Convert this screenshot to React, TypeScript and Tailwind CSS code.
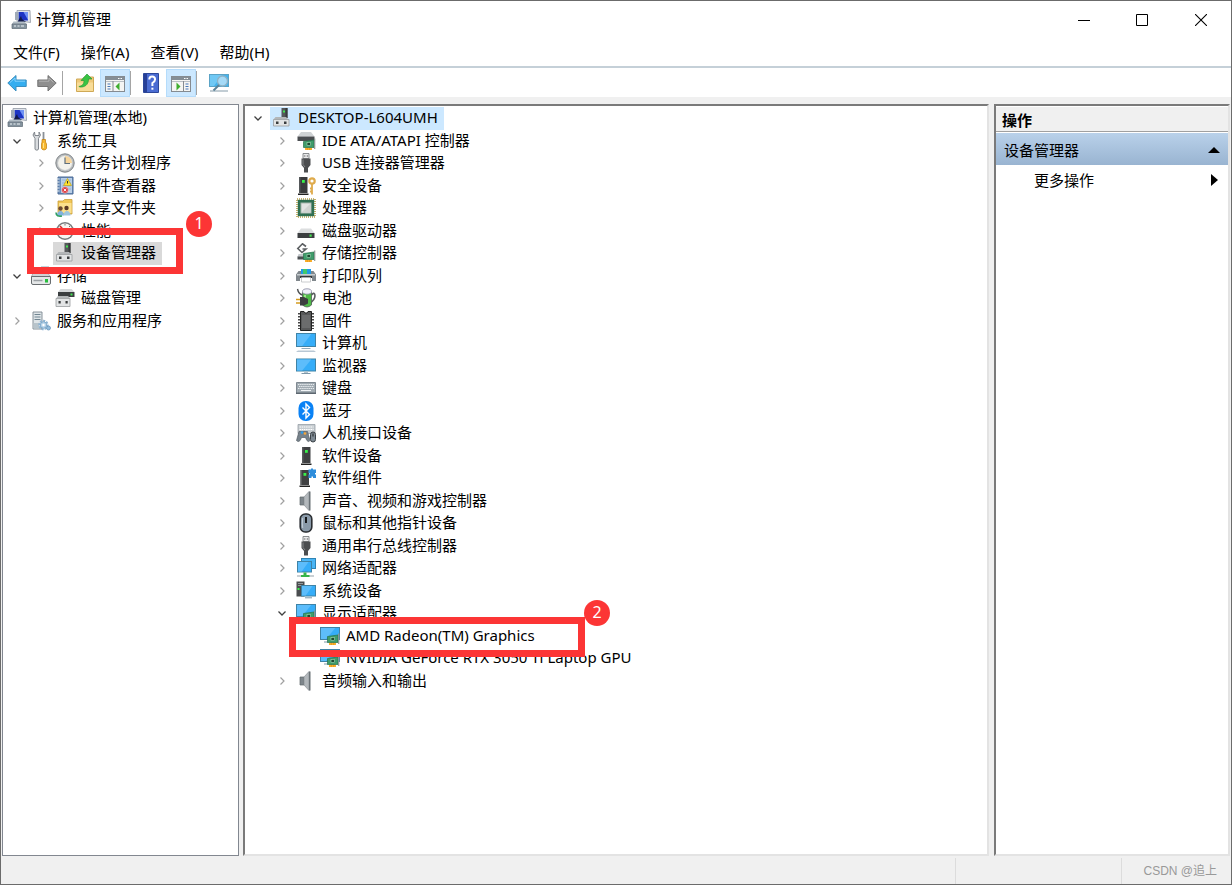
import React from "react";

type IconProps = { children: React.ReactNode };

const Svg: React.FC<IconProps> = ({ children }) => (
  <svg viewBox="0 0 20 20" className="size-5 shrink-0" aria-hidden="true">
    {children}
  </svg>
);

/* Small green adapter card, shared by several device icons */
const Card: React.FC = () => (
  <>
    <path d="M9 16.5h7V19H9z" fill="#fbb02c" />
    <path d="M11.3 16.5V19M13.7 16.5V19" stroke="#d98a14" strokeWidth="0.6" />
    <path d="M7.5 10.5L18 9v7.5H7.5z" fill="#3f9c6b" stroke="#27724a" strokeWidth="0.7" />
    <rect x="11" y="11.500" width="3.600" height="3" fill="#1c4a31" stroke="#a6dcb9" strokeWidth="0.6" />
    <path d="M18.700 7.500V18" stroke="#8e9794" strokeWidth="1.200" />
  </>
);

const Screen: React.FC<{ x: number; y: number; w: number; h: number }> = ({ x, y, w, h }) => (
  <>
    <rect x={x} y={y} width={w} height={h} fill="#36adf8" stroke="#3f83a6" />
    <path
      d={`M${x + 0.5} ${y + 0.5}h${w * 0.75}L${x + w * 0.3} ${y + h - 0.5}H${x + 0.5}z`}
      fill="#5dbdfb"
    />
  </>
);

const ComputerIcon: React.FC = () => (
  <Svg>
    <path d="M6 .5h13l.5 12-7-1H6z" fill="#dfe3ea" stroke="#9299a3" strokeWidth="0.8" />
    <path d="M7.5 2h9.500v8.500h-9.500z" fill="#1c34c4" />
    <path d="M12.500 2H17v8z" fill="#6f92f4" />
    <path d="M4 2h3.500v8H4z" fill="#a0abb8" />
    <path d="M7 11l3-5 1 3 4 3H7z" fill="#11194a" />
    <path d="M2.500 11.500h11l2 2.500H1z" fill="#b3bec6" />
    <path d="M1 14h14.500v4.500H1z" fill="#84939e" stroke="#5b6973" strokeWidth="0.7" />
    <path d="M3 16h2M6.500 16h2M10 16h3" stroke="#edf2f4" />
  </Svg>
);

const ToolsIcon: React.FC = () => (
  <Svg>
    <path
      d="M3.500 1L2 4l2 3.500V18c0 1.500 3.500 1.500 3.500 0V7.500l2-3.500L8 1v3.500H4z"
      fill="#d9dcdf"
      stroke="#777d83"
      strokeWidth="0.9"
    />
    <path d="M12.500 1v8" stroke="#8a9097" strokeWidth="1.8" />
    <path d="M11 8.500h3.500V11l1 2v4c0 2.500-5 2.500-5 0v-4l.5-2z" fill="#f7b72f" stroke="#bd7b0b" strokeWidth="0.7" />
    <path d="M12.500 12v5" stroke="#ffe28a" />
  </Svg>
);

const ClockIcon: React.FC = () => (
  <Svg>
    <circle cx="10" cy="10" r="9.200" fill="#b5b9bb" stroke="#808588" />
    <circle cx="10" cy="10" r="7.200" fill="#f3f2ec" stroke="#d8dadb" strokeWidth="0.6" />
    <path d="M10 10V3a7 7 0 0 1 7 7z" fill="#f6d49a" />
    <path d="M10 4.500v6h5" fill="none" stroke="#5f6f7c" strokeWidth="1.2" />
  </Svg>
);

const EventIcon: React.FC = () => (
  <Svg>
    <path d="M3 1h15v17H3z" fill="#6c8fbb" stroke="#4a6b96" />
    <path d="M6 2h11v15H6z" fill="#b9cee6" />
    <path d="M7 4h9M7 7h9M7 10h9M7 13h9" stroke="#8badd2" strokeWidth="0.7" />
    <path d="M1.500 3h3M1.500 6h3M1.500 9h3M1.500 12h3M1.500 15h3" stroke="#e8edf2" strokeWidth="1.2" />
    <path d="M12.500 2.500l4 7h-8z" fill="#ffe12e" stroke="#b7990d" strokeWidth="0.6" />
    <path d="M12.500 5v2.500" stroke="#333" />
    <circle cx="10" cy="14" r="3.300" fill="#dd3f45" stroke="#f3d6d6" strokeWidth="0.5" />
    <path d="M8.700 12.700l2.600 2.600M11.300 12.700l-2.600 2.600" stroke="#fff" strokeWidth="0.9" />
  </Svg>
);

const SharedIcon: React.FC = () => (
  <Svg>
    <path d="M3 3h5l1.500-1.500H17V16H3z" fill="#f1c654" stroke="#c9a03c" strokeWidth="0.8" />
    <path d="M4 5h12.500v10H4z" fill="#fbe08e" />
    <circle cx="5.500" cy="10.500" r="2.200" fill="#6c4a32" />
    <path d="M2 17.500c0-6 7-6 7 0z" fill="#7fb2dd" />
    <circle cx="11.500" cy="10" r="2.200" fill="#5a3925" />
    <path d="M8.500 17.500c0-6 7-6 7 0z" fill="#9dc5df" />
    <path d="M1 14.500c0 3.500 2.500 4 6 3.500" stroke="#2f9f63" strokeWidth="1.6" fill="none" />
  </Svg>
);

const GaugeIcon: React.FC = () => (
  <Svg>
    <circle cx="10" cy="10" r="9" fill="#777b7d" />
    <circle cx="10" cy="10" r="7.500" fill="#f6f5f2" />
    <path d="M5 5l5.500 6" stroke="#d42a2a" strokeWidth="1.6" />
    <path d="M10 3v1.500M15 5l-1 1M17 10h-1.500M3 10h1.500" stroke="#666" strokeWidth="0.9" />
  </Svg>
);

const DeviceIcon: React.FC = () => (
  <Svg>
    <path d="M9.500 0h6v10h-6z" fill="#55585a" />
    <path d="M13.500 0h2v10h-2z" fill="#37393a" />
    <rect x="11" y="2.500" width="2" height="2" fill="#43e650" />
    <path d="M3.500 9h10.500l2.500 2.500h-15z" fill="#b3b6b8" />
    <path d="M1.500 11.500h15.500V18H1.500z" fill="#e2e4e5" stroke="#999c9e" strokeWidth="0.8" />
    <path d="M4 13.500h2.500V16H4zM12 13.500h2.500V16H12z" fill="#393c3e" />
  </Svg>
);

const StorageIcon: React.FC = () => (
  <Svg>
    <path d="M3 5h12l4.500 5.500H.5z" fill="#d0d3d5" stroke="#8b9094" strokeWidth="0.6" />
    <path d="M10 1h8l1.500 6H10z" fill="#49a7c9" stroke="#397991" strokeWidth="0.6" />
    <path d="M.5 10.500h19V17q0 1.500-1.500 1.500H2Q.5 18.500.5 17z" fill="#e5e7e8" stroke="#686d70" />
    <path d="M2.500 14.500h9" stroke="#9ba0a4" strokeWidth="1.5" />
    <rect x="14" y="13" width="3" height="3.500" fill="#27bd3e" />
  </Svg>
);

const DiskMgmtIcon: React.FC = () => (
  <Svg>
    <path d="M5.500 1h11L19.500 4H3z" fill="#d4d7d9" />
    <path d="M3 4h16.500v5H3z" fill="#3b3e40" />
    <rect x="15.500" y="5.500" width="2" height="2" fill="#43e650" />
    <path d="M3 8h10l2.500 2.500H1z" fill="#b3b6b8" />
    <path d="M1 10.500h14v8H1z" fill="#e2e4e5" stroke="#999c9e" strokeWidth="0.8" />
    <path d="M3.500 13h2.200v2.500H3.500zM10.500 13h2.200v2.500h-2.200z" fill="#393c3e" />
  </Svg>
);

const ServicesIcon: React.FC = () => (
  <Svg>
    <path d="M2 1h9v17H2z" fill="#dfe5e8" stroke="#7b8790" strokeWidth="0.9" />
    <path d="M3.500 3.500h6M3.500 6h6M3.500 8.500h6" stroke="#718591" strokeWidth="1.1" />
    <path d="M2.500 12H8v5.500H2.500z" fill="#b8c4cb" />
    <circle cx="12.500" cy="14" r="4" fill="none" stroke="#8fb4d3" strokeWidth="2.4" strokeDasharray="2 1" />
    <circle cx="12.500" cy="14" r="3.200" fill="#b8d4ea" stroke="#6f9dc2" strokeWidth="0.7" />
    <circle cx="12.500" cy="14" r="1.200" fill="#fff" />
    <circle cx="17.500" cy="17" r="2" fill="#94bddd" stroke="#5d8fb7" strokeWidth="0.7" />
  </Svg>
);

const IdeIcon: React.FC = () => (
  <Svg>
    <path d="M5 1h10l3.500 4.500h-17z" fill="#cfd2d4" />
    <path d="M1.500 5.500h17v4.500h-17z" fill="#4a4d50" />
    <Card />
  </Svg>
);

const UsbIcon: React.FC = () => (
  <Svg>
    <path d="M7 .5h6v5H7z" fill="#e9eaeb" stroke="#7e8183" strokeWidth="0.9" />
    <path d="M8.300 2.500h1v1h-1zM10.800 2.500h1v1h-1z" fill="#333" />
    <path d="M5.500 5.500h9V12l-2.500 3v4.500H8V15l-2.500-3z" fill="#4c4e50" />
    <path d="M7 6.500v5L9 14" stroke="#85888a" fill="none" />
  </Svg>
);

const SecurityIcon: React.FC = () => (
  <Svg>
    <path d="M3 1h8.500v16H3z" fill="#3a3b3d" />
    <path d="M3 1h1.500v16H3z" fill="#55585a" />
    <path d="M2 17.500h10.500V19H2z" fill="#222" />
    <rect x="6" y="4" width="2.800" height="2.800" fill="#38f04a" />
    <circle cx="16" cy="5" r="2.700" fill="none" stroke="#dfab4c" strokeWidth="2.200" />
    <path d="M16 8v10.500M16 12.500h-2M16 15.500h-2" stroke="#dfab4c" strokeWidth="1.8" />
  </Svg>
);

const CpuIcon: React.FC = () => (
  <Svg>
    <rect x="1" y="1" width="18" height="18" fill="none" stroke="#b59c45" strokeWidth="1.6" strokeDasharray="1 1" />
    <rect x="1.800" y="1.800" width="16.400" height="16.400" fill="#2f6f52" />
    <rect x="5" y="5" width="10" height="10" fill="#e2e4e3" stroke="#a9b8af" />
    <path d="M5.500 14.500h9v-9z" fill="#d0d3d1" />
  </Svg>
);

const DriveIcon: React.FC = () => (
  <Svg>
    <path d="M5 7.500h10l3.500 4.500h-17z" fill="#dcdedf" />
    <path d="M1.500 12h17v5h-17z" fill="#3b3e40" />
    <rect x="13.500" y="13.500" width="2.200" height="2.200" fill="#43e650" />
  </Svg>
);

const StorageCtrlIcon: React.FC = () => (
  <Svg>
    <path d="M10 3.500L6.500.8 1.800 5.500l4.200 4 4-3.500H6.500" fill="none" stroke="#5c5f62" strokeWidth="1.6" />
    <path d="M2.500 11H9v3H1.500z" fill="#c3c7ca" />
    <path d="M1.500 13.500H9v3H1.500z" fill="#4b4f52" />
    <Card />
  </Svg>
);

const PrinterIcon: React.FC = () => (
  <Svg>
    <path d="M5 3h10v5H5z" fill="#209ae7" />
    <path d="M7 3h4v5H7z" fill="#41c96c" />
    <path d="M2.500 5H5v3h10V5h2.500L20 8.500v6.500h-4v-3H4v3H0V8.500z" fill="#80878c" />
    <path d="M1 8h18v1.500H1z" fill="#c7cccf" />
    <path d="M4 10h12v2H4z" fill="#34373a" />
    <path d="M5.500 11.500h9V16h-9z" fill="#fff" stroke="#b5b8ba" strokeWidth="0.7" />
  </Svg>
);

const BatteryIcon: React.FC = () => (
  <Svg>
    <path d="M15.500 7c3-4 4 0 3 3s-3 3-4 6" stroke="#5b5f61" strokeWidth="1.6" fill="none" />
    <path d="M6.500 4Q11-1 15.500 4v13q-4.500 4-9 0z" fill="#4fbb48" stroke="#536158" strokeWidth="0.8" />
    <ellipse cx="11" cy="3.500" rx="4.500" ry="2.700" fill="#f0f0fa" stroke="#8789a0" strokeWidth="0.8" />
    <path d="M9 7v8" stroke="#baf0a7" strokeWidth="1.5" />
    <path d="M1.500 1q1 5 5 6" stroke="#4b4f51" strokeWidth="1.4" fill="none" />
    <path d="M4 9h4l4 2v4.500l-4 2H4z" fill="#3c3e40" />
    <path d="M0 11.500h4M0 15h4" stroke="#d49c20" strokeWidth="1.5" />
  </Svg>
);

const FirmwareIcon: React.FC = () => (
  <Svg>
    <path d="M4.500.5H8L9 2h2l1-1.500h3.500v19h-11z" fill="#58595a" stroke="#222" />
    <path d="M3 2v16M17 2v16" stroke="#333" strokeWidth="1.8" strokeDasharray="1.5 1.5" />
    <path d="M6 4h8v13H6z" fill="#6b6c6d" />
  </Svg>
);

const PcIcon: React.FC = () => (
  <Svg>
    <Screen x={0.5} y={0.5} w={19} h={13} />
    <path d="M5.500 15.500h9" stroke="#8fa9ba" />
    <path d="M2 17.500h16l2 1.500H0z" fill="#b8c7d4" />
  </Svg>
);

const MonitorIcon: React.FC = () => (
  <Svg>
    <Screen x={0.5} y={3} w={19} h={12} />
    <path d="M8 15.500h4V17H8z" fill="#b3c4cf" />
    <path d="M5.500 17.500h9" stroke="#7d97a8" />
  </Svg>
);

const KeyboardIcon: React.FC = () => (
  <Svg>
    <path d="M.5 4.500h19v11H.5z" fill="#a1abb2" stroke="#808a92" />
    <path d="M2 6.500h16M3 8.500h15M2 10.500h16" stroke="#e8ecef" strokeWidth="1.1" strokeDasharray="1.4 .7" />
    <path d="M5 12.500h10" stroke="#f1f4f6" />
    <path d="M0 14.500h20V16H0z" fill="#5d6770" />
  </Svg>
);

const BluetoothIcon: React.FC = () => (
  <Svg>
    <rect x="2.500" y="0" width="15" height="20" rx="7" fill="#0a82f5" />
    <path d="M6.500 6.500l7 7L10 17V3l3.500 3.500-7 7" fill="none" stroke="#fff" strokeWidth="1.4" />
  </Svg>
);

const HidIcon: React.FC = () => (
  <Svg>
    <path d="M2 1.500h17v9H2z" fill="#c6ccd0" stroke="#98a0a6" strokeWidth="0.8" />
    <path d="M3.500 4h14M3.500 6.500h14" stroke="#fff" strokeWidth="1.2" strokeDasharray="1.5 .7" />
    <path d="M3 8.500h8.500l2.500 9c-1.500 2-3 1-4.500-3h-4c-1.500 4-3 5-5 3z" fill="#77828b" stroke="#555d64" strokeWidth="0.7" />
    <circle cx="6" cy="9.500" r="1.300" fill="#2c9ceb" />
    <circle cx="9" cy="10.500" r="1.300" fill="#f2a63a" />
    <rect x="14.500" y="9" width="5" height="10" rx="2.500" fill="#7d8993" stroke="#3c4247" />
    <path d="M17 10.500v3" stroke="#222" />
  </Svg>
);

const SoftDeviceIcon: React.FC = () => (
  <Svg>
    <path d="M6 1h8.500v16H6z" fill="#3f4042" />
    <path d="M6 1h1.500v16H6z" fill="#595b5d" />
    <path d="M5 17.500h10.500V19H5z" fill="#222" />
    <rect x="9" y="4" width="2.800" height="2.800" fill="#38f04a" />
  </Svg>
);

const SoftComponentIcon: React.FC = () => (
  <Svg>
    <path d="M4.500 2H13v15H4.500z" fill="#3f4042" />
    <path d="M4.500 2H6v15H4.500z" fill="#595b5d" />
    <path d="M3.500 17.500H14V19H3.500z" fill="#222" />
    <rect x="7.500" y="5" width="2.800" height="2.800" fill="#38f04a" />
    <path d="M12.500 1.500H15V.5h2v1h3V5h-1v1.500h1v3.500h-3V8.500h-1.500V10h-3V6.500h1V5h-1z" fill="#2e8ddb" />
  </Svg>
);

const SpeakerIcon: React.FC = () => (
  <Svg>
    <path d="M4 6h4v8H4z" fill="#7e868c" stroke="#60676c" strokeWidth="0.7" />
    <path d="M8 6l5-5.500v19L8 14z" fill="#b3b8bc" stroke="#8b9196" strokeWidth="0.7" />
    <path d="M13 .5h1.500v19H13z" fill="#6b7277" />
  </Svg>
);

const MouseIcon: React.FC = () => (
  <Svg>
    <rect x="4.200" y="1" width="11.600" height="18" rx="5" fill="#8a9aa9" stroke="#2a2e32" strokeWidth="1.6" />
    <path d="M6.700 5q-.7 5 0 10" stroke="#c3ced8" fill="none" />
    <path d="M10 4v6" stroke="#17191b" strokeWidth="2" />
  </Svg>
);

const NetworkIcon: React.FC = () => (
  <Svg>
    <rect x="5.500" y="0.500" width="14" height="10" fill="#4ab5f5" stroke="#2f84b4" />
    <Screen x={1.5} y={3.5} w={14} h={10.5} />
    <path d="M7.500 14.500h3V17h-3z" fill="#37b54a" />
    <path d="M1 18h17" stroke="#c3cbd0" strokeWidth="1.800" />
    <path d="M5 17h8.500v2H5z" fill="#37b54a" />
  </Svg>
);

const SystemIcon: React.FC = () => (
  <Svg>
    <path d="M.5.500h8v15h-8z" fill="#4a4d4f" />
    <path d="M2 2.500h5M2 4.500h5" stroke="#94989b" />
    <rect x="1.500" y="7" width="2" height="2" fill="#38f04a" />
    <Screen x={5.5} y={4.5} w={14} h={10.5} />
    <path d="M9 16.800h7" stroke="#7d97a8" />
  </Svg>
);

const DisplayIcon: React.FC = () => (
  <Svg>
    <Screen x={0.5} y={1.5} w={19} h={12} />
    <path d="M4 16h4" stroke="#7d97a8" />
    <Card />
  </Svg>
);

type Node = {
  label: string;
  icon: React.FC;
  depth: 0 | 1 | 2 | 3;
  open?: boolean;
  leaf?: boolean;
  mark?: "gray" | "blue";
};

// leaves have no arrow, so their depth is one more than the nesting level
const consoleTree: Node[] = [
  { label: "计算机管理(本地)", icon: ComputerIcon, depth: 0, leaf: true },
  { label: "系统工具", icon: ToolsIcon, depth: 0, open: true },
  { label: "任务计划程序", icon: ClockIcon, depth: 1 },
  { label: "事件查看器", icon: EventIcon, depth: 1 },
  { label: "共享文件夹", icon: SharedIcon, depth: 1 },
  { label: "性能", icon: GaugeIcon, depth: 1 },
  { label: "设备管理器", icon: DeviceIcon, depth: 2, leaf: true, mark: "gray" },
  { label: "存储", icon: StorageIcon, depth: 0, open: true },
  { label: "磁盘管理", icon: DiskMgmtIcon, depth: 2, leaf: true },
  { label: "服务和应用程序", icon: ServicesIcon, depth: 0 },
];

const deviceTree: Node[] = [
  { label: "DESKTOP-L604UMH", icon: DeviceIcon, depth: 0, open: true, mark: "blue" },
  { label: "IDE ATA/ATAPI 控制器", icon: IdeIcon, depth: 1 },
  { label: "USB 连接器管理器", icon: UsbIcon, depth: 1 },
  { label: "安全设备", icon: SecurityIcon, depth: 1 },
  { label: "处理器", icon: CpuIcon, depth: 1 },
  { label: "磁盘驱动器", icon: DriveIcon, depth: 1 },
  { label: "存储控制器", icon: StorageCtrlIcon, depth: 1 },
  { label: "打印队列", icon: PrinterIcon, depth: 1 },
  { label: "电池", icon: BatteryIcon, depth: 1 },
  { label: "固件", icon: FirmwareIcon, depth: 1 },
  { label: "计算机", icon: PcIcon, depth: 1 },
  { label: "监视器", icon: MonitorIcon, depth: 1 },
  { label: "键盘", icon: KeyboardIcon, depth: 1 },
  { label: "蓝牙", icon: BluetoothIcon, depth: 1 },
  { label: "人机接口设备", icon: HidIcon, depth: 1 },
  { label: "软件设备", icon: SoftDeviceIcon, depth: 1 },
  { label: "软件组件", icon: SoftComponentIcon, depth: 1 },
  { label: "声音、视频和游戏控制器", icon: SpeakerIcon, depth: 1 },
  { label: "鼠标和其他指针设备", icon: MouseIcon, depth: 1 },
  { label: "通用串行总线控制器", icon: UsbIcon, depth: 1 },
  { label: "网络适配器", icon: NetworkIcon, depth: 1 },
  { label: "系统设备", icon: SystemIcon, depth: 1 },
  { label: "显示适配器", icon: DisplayIcon, depth: 1, open: true },
  { label: "AMD Radeon(TM) Graphics", icon: DisplayIcon, depth: 3, leaf: true },
  { label: "NVIDIA GeForce RTX 3050 Ti Laptop GPU", icon: DisplayIcon, depth: 3, leaf: true },
  { label: "音频输入和输出", icon: SpeakerIcon, depth: 1 },
];

const indent = { 0: "pl-0", 1: "pl-6", 2: "pl-12", 3: "pl-18" };
const marks = { gray: "bg-[#d9d9d9]", blue: "bg-[#cce8ff]" };

const TreeRow: React.FC<{ node: Node }> = ({ node }) => {
  const Icon = node.icon;
  return (
    <li className={`flex min-h-0 items-stretch ${indent[node.depth]}`}>
      {!node.leaf && (
        <button className="flex w-6 shrink-0 items-center justify-center" aria-label={node.label} aria-expanded={!!node.open}>
          <svg viewBox="0 0 10 10" className="size-2.5" fill="none" aria-hidden="true">
            {node.open ? (
              <path d="M1.500 3.500L5 7l3.500-3.500" stroke="#404040" strokeWidth="1.3" />
            ) : (
              <path d="M3.500 1.500L7 5 3.500 8.500" stroke="#a0a0a0" strokeWidth="1.2" />
            )}
          </svg>
        </button>
      )}
      <span className={`flex items-center gap-1.5 pr-1.5 pl-0.5 whitespace-nowrap ${node.mark ? marks[node.mark] : ""}`}>
        <Icon />
        <span className="pb-0.5 leading-5">{node.label}</span>
      </span>
    </li>
  );
};

const Callout: React.FC<{ box: string; badge: string; n: number }> = ({ box, badge, n }) => (
  <>
    <div className={`pointer-events-none absolute border-[7px] border-[#fc3535] ${box}`} />
    <div
      className={`absolute flex size-[26px] items-center justify-center rounded-full bg-[#fc3535] pb-0.5 text-base leading-5 text-white ${badge}`}
    >
      {n}
    </div>
  </>
);

const ToolButton: React.FC<{ label: string; active?: boolean; children: React.ReactNode }> = ({ label, active, children }) => (
  <button
    aria-label={label}
    className={`flex h-7 w-[30px] items-center justify-center border ${
      active ? "border-[#b5dcfb] bg-[#cce8ff]" : "border-transparent"
    }`}
  >
    {children}
  </button>
);

const Divider: React.FC = () => <span className="h-6 w-px bg-[#a5a5a5]" />;

const PaneFrame: React.FC = () => (
  <>
    <rect x="0.500" y="3.500" width="19" height="15" fill="#f5f5f3" stroke="#858b91" />
    <path d="M1 4h18v3H1z" fill="#858e96" />
    <path d="M13 5.500h1.500M15.500 5.500H17" stroke="#fff" />
    <path d="M1 8.500h18" stroke="#b9bfc5" />
  </>
);

const Toolbar: React.FC = () => (
  <div className="flex h-[29px] items-center bg-white pl-px">
    <ToolButton label="后退">
      <Svg>
        <path d="M.8 10L9 2.500V7h10.200v6.500H9V18z" fill="#35aef0" stroke="#3b8fc0" />
        <path d="M3 9.500L8 5v3.200h10" fill="none" stroke="#86d2fb" />
      </Svg>
    </ToolButton>
    <ToolButton label="前进">
      <Svg>
        <path d="M19.200 10L11 2.500V7H.8v6.500H11V18z" fill="#8f8f8f" stroke="#757575" />
        <path d="M2 8.200h10V5l4.500 4.500" fill="none" stroke="#b2b2b2" />
      </Svg>
    </ToolButton>
    <Divider />
    <div className="ml-[7px] flex items-center">
      <ToolButton label="向上">
        <Svg>
          <path d="M1.500 6h6l2-2h9v14.500h-17z" fill="#efc97a" stroke="#cfa956" />
          <path d="M2 9.500h16V18H2z" fill="#f8dc98" />
          <path d="M4 13.500c4-1 5-3 5-6H6L12 1l5 5h-3.500c0 6-4 8.500-9 8z" fill="#39c443" stroke="#2b9a38" strokeWidth="0.7" />
        </Svg>
      </ToolButton>
      <ToolButton label="显示/隐藏控制台树" active>
        <Svg>
          <PaneFrame />
          <path d="M8 8v10.500" stroke="#858b91" />
          <path d="M2.500 11h3M2.500 13.500h3M2.500 16h3" stroke="#4879b8" strokeWidth="1.2" />
          <path d="M14.500 9.500v8L10.500 13.500z" fill="#3eae2e" />
        </Svg>
      </ToolButton>
    </div>
    <Divider />
    <div className="ml-[5px] flex items-center">
      <ToolButton label="帮助">
        <Svg>
          <path d="M2.500.5h15v19h-15z" fill="#4a6cd2" stroke="#2c479a" />
          <path d="M3 1h3v18H3z" fill="#273f97" />
          <path d="M8.300 6.500q0-3 2.800-3t3 2.800q0 2.200-2.700 3.700v3" fill="none" stroke="#fff" strokeWidth="2" />
          <path d="M10.400 14.700h2v2h-2z" fill="#fff" />
        </Svg>
      </ToolButton>
      <ToolButton label="显示/隐藏操作窗格" active>
        <Svg>
          <PaneFrame />
          <path d="M12.500 8v10.500" stroke="#858b91" />
          <path d="M14.500 11h3M14.500 13.500h3M14.500 16h3" stroke="#4879b8" strokeWidth="1.2" />
          <path d="M5.500 9.500v8l4-4z" fill="#3eae2e" />
        </Svg>
      </ToolButton>
    </div>
    <Divider />
    <div className="ml-[7px] flex items-center">
      <ToolButton label="扫描检测硬件改动">
        <Svg>
          <rect x="0.500" y="1.500" width="19" height="12" fill="#43b3ee" stroke="#5ba3c6" />
          <path d="M1 2h12L5 13H1z" fill="#70c8f4" />
          <path d="M1 18h18" stroke="#aebdc6" strokeWidth="1.5" />
          <circle cx="13.500" cy="8" r="5" fill="#a5daf7" stroke="#8fb2c5" strokeWidth="1.3" />
          <path d="M10 12l-5.500 5.500" stroke="#5c8298" strokeWidth="2" />
        </Svg>
      </ToolButton>
    </div>
  </div>
);

const App: React.FC = () => {
  return (
    <div className="flex min-h-screen flex-col border border-[#6b6b6b] bg-[#f0f0f0] font-['Noto_Sans','Noto_Sans_CJK_SC',sans-serif] text-[15px] leading-5 text-black">
      {/* Title bar */}
      <header className="flex h-[38px] items-center bg-white pl-2.5">
        <ComputerIcon />
        <h1 className="ml-[5px] pb-0.5">计算机管理</h1>
        <div className="ml-auto flex h-full">
          <button className="flex w-[58px] items-center justify-center" aria-label="最小化">
            <svg viewBox="0 0 12 12" className="size-3">
              <path d="M0 6.500h12" stroke="#000" />
            </svg>
          </button>
          <button className="flex w-[58px] items-center justify-center" aria-label="最大化">
            <svg viewBox="0 0 12 12" className="size-3">
              <path d="M.5.500h11v11H.5z" fill="none" stroke="#000" />
            </svg>
          </button>
          <button className="flex w-[60px] items-center justify-center" aria-label="关闭">
            <svg viewBox="0 0 12 12" className="size-3">
              <path d="M0 0l12 12M12 0L0 12" stroke="#000" strokeWidth="1.1" />
            </svg>
          </button>
        </div>
      </header>

      {/* Menu */}
      <nav className="flex h-[29px] items-center gap-[21px] border-b-2 border-[#c5d0d8] bg-white pb-0.5 pl-3">
        <button>文件(F)</button>
        <button>操作(A)</button>
        <button>查看(V)</button>
        <button>帮助(H)</button>
      </nav>

      <Toolbar />

      {/* Panes */}
      <main className="flex flex-1 pt-[7px] pr-px pl-px">
        <section className="relative w-[237px] shrink-0 border border-[#828790] bg-white pt-0.5 pl-0.5">
          <ul className="grid h-[225px] auto-rows-fr">
            {consoleTree.map((node) => (
              <TreeRow key={node.label} node={node} />
            ))}
          </ul>
          <Callout n={1} box="left-[24px] top-[123px] h-[46px] w-[156px]" badge="left-[183px] top-[106px]" />
        </section>

        <section className="relative ml-1 flex-1 border-2 border-t-[#7a7a7a] border-r-[#e3e3e3] border-b-[#e3e3e3] border-l-[#7a7a7a] bg-white pt-px pl-px">
          <ul className="grid h-[585px] auto-rows-fr">
            {deviceTree.map((node) => (
              <TreeRow key={node.label} node={node} />
            ))}
          </ul>
          <Callout n={2} box="left-[44px] top-[511px] h-[40px] w-[296px]" badge="left-[339px] top-[494px]" />
        </section>

        <aside className="ml-[5px] w-[236px] shrink-0 border-2 border-t-[#7a7a7a] border-r-[#e3e3e3] border-b-[#e3e3e3] border-l-[#7a7a7a] bg-white">
          <h2 className="mt-px h-[25px] border-b border-[#a0a0a0] bg-[#f0f0f0] pt-[3px] pl-1.5 font-bold">操作</h2>
          <button className="mt-px flex h-8 w-full items-center justify-between bg-linear-to-b from-[#b9d1ea] to-[#99b4d1] px-2 pt-px">
            设备管理器
            <svg viewBox="0 0 12 6" className="h-1.5 w-3">
              <path d="M0 6l6-6 6 6z" />
            </svg>
          </button>
          <button className="flex h-[30px] w-full items-center justify-between pr-2.5 pl-[38px]">
            更多操作
            <svg viewBox="0 0 7 12" className="h-3 w-[7px]">
              <path d="M0 0l7 6-7 6z" />
            </svg>
          </button>
        </aside>
      </main>

      {/* Status bar */}
      <footer className="flex h-7 items-stretch justify-end pt-0.5">
        <span className="w-[166px] border-l border-[#dcdcdc]" />
        <span className="flex w-[110px] items-center justify-end border-l border-[#dcdcdc] pr-3.5 font-['Liberation_Sans','Noto_Sans_CJK_SC',sans-serif] text-xs text-[#999999]">
          CSDN @追上
        </span>
      </footer>
    </div>
  );
};

export default App;
